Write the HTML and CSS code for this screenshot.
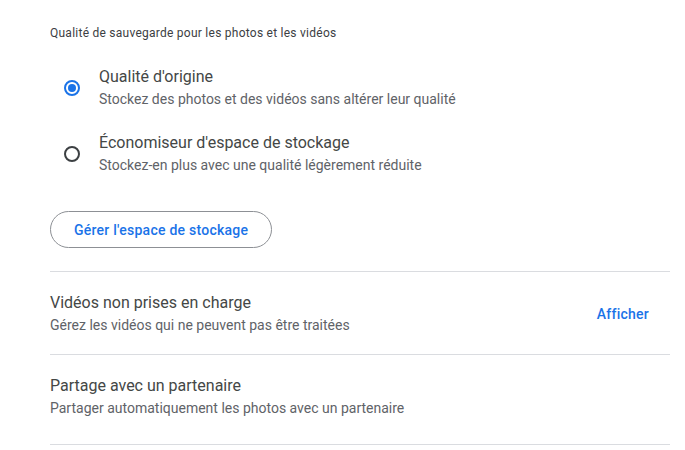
FILE: index.html
```html
<!DOCTYPE html>
<html lang="fr">

<head>
  <meta charset="UTF-8" />
  <meta name="viewport" content="width=device-width, initial-scale=1.0" />
  <title>Paramètres de sauvegarde</title>
  <link rel="stylesheet" href="styles.css">
</head>

<body>
  <div class="settings">
    <div class="section-label">Qualité de sauvegarde pour les photos et les vidéos</div>

    <div class="options">
      <label class="option">
        <span class="radio checked"></span>
        <span class="option-text">
          <span class="option-title">Qualité d'origine</span>
          <span class="option-desc">Stockez des photos et des vidéos sans altérer leur qualité</span>
        </span>
      </label>
      <label class="option">
        <span class="radio"></span>
        <span class="option-text">
          <span class="option-title">Économiseur d'espace de stockage</span>
          <span class="option-desc">Stockez-en plus avec une qualité légèrement réduite</span>
        </span>
      </label>
    </div>

    <button class="outline-btn">Gérer l'espace de stockage</button>

    <div class="row first">
      <div class="row-text">
        <div class="row-title">Vidéos non prises en charge</div>
        <div class="row-desc">Gérez les vidéos qui ne peuvent pas être traitées</div>
      </div>
      <a class="row-action" href="#">Afficher</a>
    </div>

    <div class="row last">
      <div class="row-text">
        <div class="row-title">Partage avec un partenaire</div>
        <div class="row-desc">Partager automatiquement les photos avec un partenaire</div>
      </div>
    </div>
  </div>
</body>

</html>
```

FILE: styles.css
```css
* {
  box-sizing: border-box;
}

body {
  margin: 0;
  font-family: Roboto, "Noto Sans", sans-serif;
  background: #fff;
  color: #3c4043;
}

.settings {
  width: 670px;
  padding: 25px 0 0 50px;
}

.section-label {
  font-size: 12px;
  line-height: 16px;
  letter-spacing: 0.25px;
  color: #3c4043;
}

/* Radio options */
.options {
  margin-top: 25px;
  display: flex;
  flex-direction: column;
  gap: 22px;
}

.option {
  display: flex;
  align-items: center;
  padding-left: 14px;
  gap: 19px;
  cursor: pointer;
}

.radio {
  width: 16px;
  height: 16px;
  border: 2px solid #3c4043;
  border-radius: 50%;
  flex-shrink: 0;
  display: flex;
  align-items: center;
  justify-content: center;
}

.radio.checked {
  border-color: #1a73e8;
}

.radio.checked::after {
  content: "";
  width: 8px;
  height: 8px;
  border-radius: 50%;
  background: #1a73e8;
}

.option-text {
  display: flex;
  flex-direction: column;
}

.option-title {
  font-size: 16px;
  line-height: 22px;
  color: #444746;
}

.option-desc {
  font-size: 14px;
  line-height: 22px;
  color: #5f6368;
}

.outline-btn {
  margin-top: 35px;
  height: 37px;
  padding: 0 23px;
  border: 1px solid #8d9095;
  border-radius: 19px;
  background: #fff;
  color: #1a73e8;
  font-family: inherit;
  font-size: 14px;
  font-weight: 500;
  letter-spacing: 0.25px;
  cursor: pointer;
}

/* List rows */
.row {
  display: flex;
  align-items: center;
  justify-content: space-between;
  border-top: 1px solid #dadce0;
  padding: 20px 21px 18px 0;
}

.row.first {
  margin-top: 23px;
}

.row.last {
  padding-bottom: 25px;
  border-bottom: 1px solid #dadce0;
}

.row-title {
  font-size: 16px;
  line-height: 22px;
  color: #444746;
}

.row-desc {
  font-size: 14px;
  line-height: 22px;
  color: #5f6368;
}

.row-action {
  color: #1a73e8;
  font-size: 14px;
  font-weight: 500;
  letter-spacing: 0.25px;
  text-decoration: none;
}
```
